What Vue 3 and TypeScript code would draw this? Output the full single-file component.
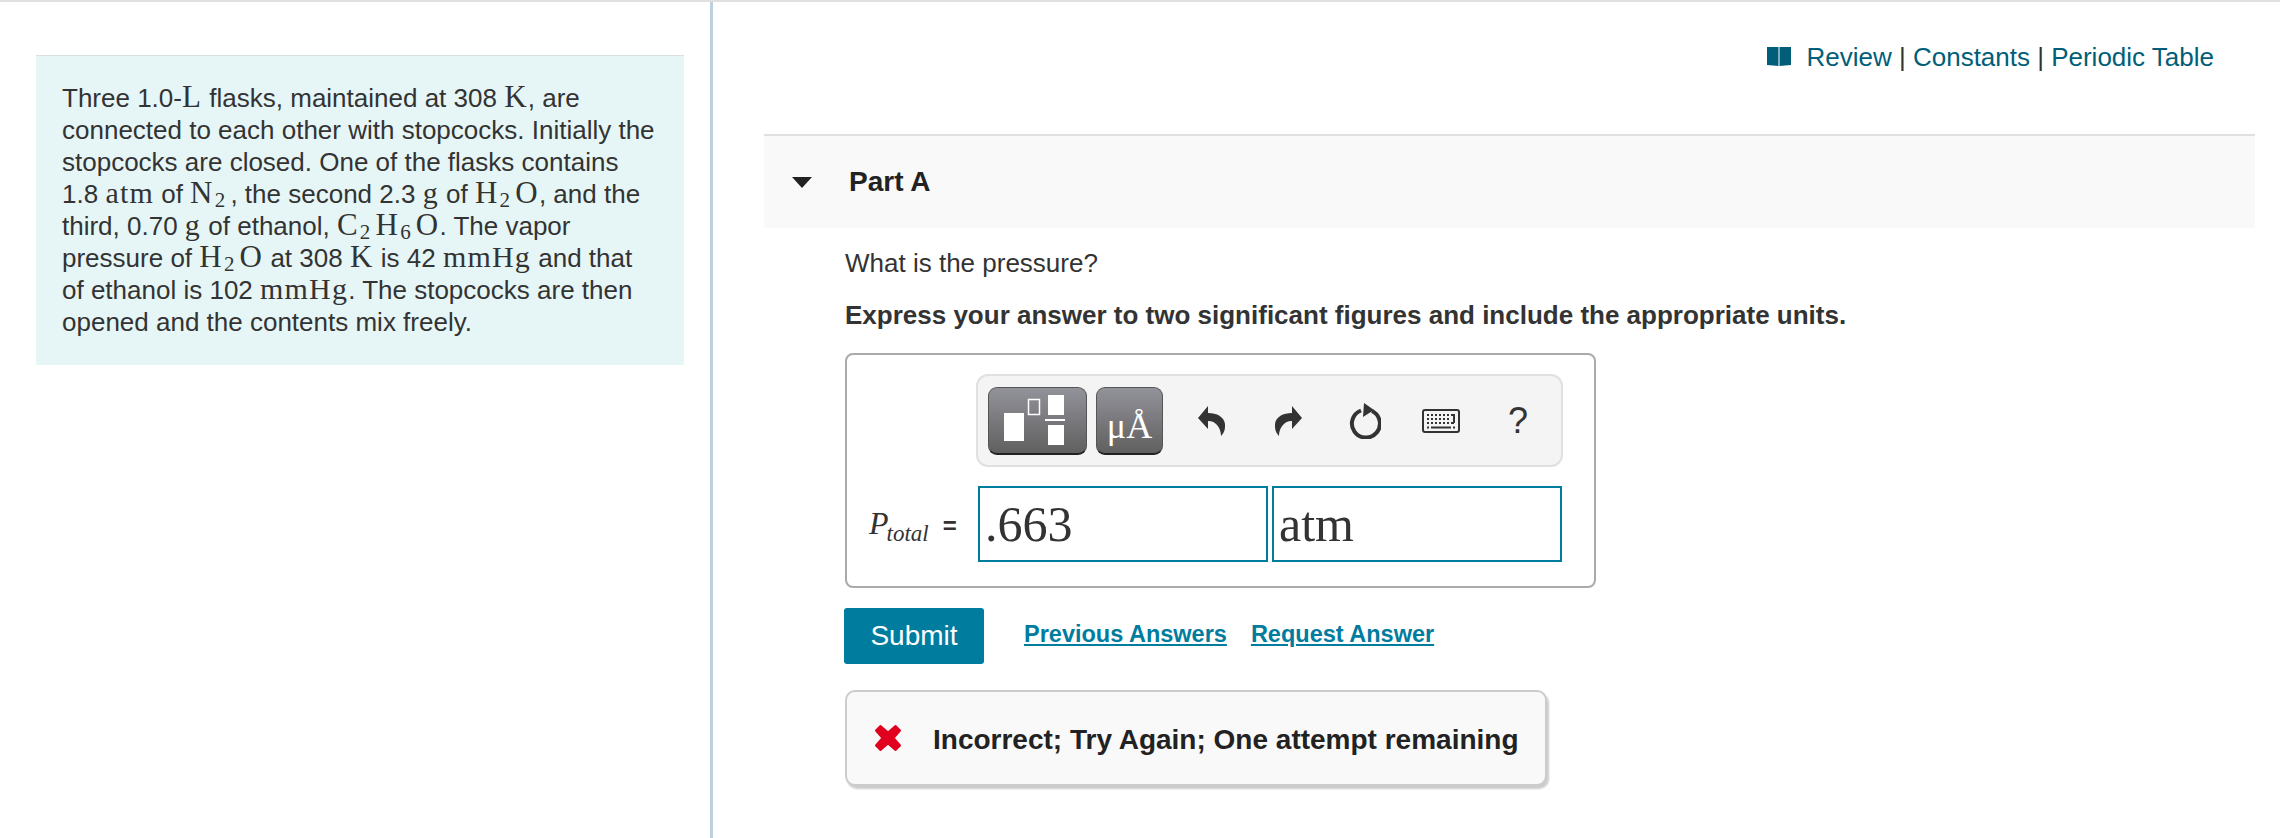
<script setup lang="ts">
// 作答页：左侧题干，右侧 Part A 作答区
const links = ['Review', 'Constants', 'Periodic Table']
</script>

<template>
  <div class="page">
    <aside class="side">
      <div class="intro">
        Three 1.0-<span class="m big">L</span> flasks, maintained at 308 <span class="m big">K</span>, are connected to each other with stopcocks. Initially the stopcocks are closed. One of the flasks contains 1.8 <span class="m">atm</span> of <span class="m big">N<sub>2</sub></span>, the second 2.3 <span class="m">g</span> of <span class="m big">H<sub>2</sub>O</span>, and the third, 0.70 <span class="m">g</span> of ethanol, <span class="m big">C<sub>2</sub>H<sub>6</sub>O</span>. The vapor pressure of <span class="m big">H<sub>2</sub>O</span> at 308 <span class="m big">K</span> is 42 <span class="m">mmHg</span> and that of ethanol is 102 <span class="m">mmHg</span>. The stopcocks are then opened and the contents mix freely.
      </div>
    </aside>

    <main class="main">
      <nav class="toplinks">
        <svg class="book" width="24" height="20" viewBox="0 0 24 20">
          <path d="M0 0h11.500v19L0 18zM12.500 0H24v18l-11.500 1z" fill="#005e78" />
        </svg>
        <template v-for="(link, i) in links" :key="link">
          <span v-if="i > 0" class="sep">|</span>
          <a class="toplink">{{ link }}</a>
        </template>
      </nav>

      <section class="part-head">
        <span class="caret"></span>
        <h2 class="part-title">Part A</h2>
      </section>

      <section class="part-body">
        <p class="question">What is the pressure?</p>
        <p class="instruction">Express your answer to two significant figures and include the appropriate units.</p>

        <div class="answer">
          <div class="toolbar">
            <button class="tool tool-wide">
              <svg class="tpl-icon" width="61" height="50" viewBox="0 0 61 50">
                <rect x="0" y="18" width="20" height="28" fill="#fff" />
                <rect x="24.500" y="4.500" width="11" height="15" fill="none" stroke="#fff" stroke-width="1.500" />
                <rect x="44" y="0" width="16" height="20" fill="#fff" />
                <rect x="41" y="24" width="20" height="2" fill="#fff" />
                <rect x="44" y="30" width="16" height="20" fill="#fff" />
              </svg>
            </button>
            <button class="tool tool-unit">
              <span class="unit-text">μÅ</span>
            </button>
            <svg class="ico ico-undo" width="27" height="30" viewBox="0 0 27 30">
              <path d="M0 12 10 0v7c10 0 18 5 17 14 0 4-2 7-4 9 0-7-4-15-13-15v8z" fill="#333" />
            </svg>
            <svg class="ico ico-redo" width="27" height="30" viewBox="0 0 27 30">
              <path d="M27 12 17 0v7C7 7-1 12 0 21c0 4 2 7 4 9 0-7 4-15 13-15v8z" fill="#333" />
            </svg>
            <svg class="ico ico-reset" width="32" height="36" viewBox="0 0 32 36">
              <path d="M12 7.500A14 14 0 1 0 23 8" fill="none" stroke="#333" stroke-width="4" />
              <path d="M15 0l10 7-11 7z" fill="#333" />
            </svg>
            <svg class="ico ico-keys" width="38" height="24" viewBox="0 0 38 24">
              <rect x="1" y="1" width="36" height="22" rx="2" fill="#f4f4f4" stroke="#333" stroke-width="2" />
              <path d="M5 6h2M9 6h2M13 6h2M17 6h2M21 6h2M25 6h2M29 6h4M5 10h2M9 10h2M13 10h2M17 10h2M21 10h2M25 10h2M32 7v7M29 14h3M5 14h2M9 14h2M13 14h2M17 14h2M21 14h2M25 14h2M5 18.500h2M9 18.500h20M31 18.500h2" stroke="#333" stroke-width="2" />
            </svg>
            <span class="help">?</span>
          </div>
          <div class="entry">
            <span class="label"><i>P</i><sub><i>total</i></sub><span class="eq">=</span></span>
            <div class="field">.663</div>
            <div class="field">atm</div>
          </div>
        </div>

        <div class="actions">
          <button class="submit">Submit</button>
          <a class="action-link">Previous Answers</a>
          <a class="action-link">Request Answer</a>
        </div>

        <div class="feedback">
          <svg width="28" height="28" viewBox="0 0 28 28">
            <path d="M2 6.500 6.500 2 14 8.500 21.500 2 26 6.500 19.500 14 26 21.500 21.500 26 14 19.500 6.500 26 2 21.500 8.500 14z" fill="#e1001e" stroke="#e1001e" stroke-width="2" stroke-linejoin="round" />
          </svg>
          <span class="feedback-text">Incorrect; Try Again; One attempt remaining</span>
        </div>
      </section>
    </main>
  </div>
</template>

<style>
html, body {
  margin: 0;
  background: #fff;
}
</style>

<style scoped>
.page {
  display: grid;
  grid-template-columns: 713px 1fr;
  height: 836px;
  border-top: 2px solid #e0e0e0;
  font-family: "Liberation Sans", Arial, sans-serif;
  color: #333;
  overflow: hidden;
}

.side {
  border-right: 3px solid #bdd0e0;
  padding: 53px 26px 0 36px;
}

.intro {
  background: #e6f6f6;
  border-top: 1px solid #d8e0e0;
  padding: 26px 26px 27px 26px;
  font-size: 26px;
  line-height: 32px;
  color: #333;
}

.m {
  font-family: "Liberation Serif", serif;
  font-size: 30px;
  letter-spacing: 1.200px;
  line-height: 0;
}

.m.big {
  font-size: 31px;
}

.m sub {
  margin: 0 4px 0 1px;
  font-size: 21px;
  line-height: 0;
  vertical-align: -4px;
}

.main {
  padding: 0 25px 0 51px;
}

.toplinks {
  display: flex;
  justify-content: flex-end;
  align-items: center;
  height: 110px;
  padding-right: 41px;
  margin-bottom: 22px;
  font-size: 26px;
}

.book {
  margin-right: 16px;
}

.toplink {
  color: #005e78;
}

.sep {
  color: #333;
  margin: 0 7.200px;
}

.part-head {
  display: flex;
  align-items: center;
  height: 92px;
  background: #f9f9f9;
  border-top: 2px solid #e0e0e0;
}

.caret {
  width: 0;
  height: 0;
  margin-left: 28px;
  border-left: 10.500px solid transparent;
  border-right: 10.500px solid transparent;
  border-top: 11px solid #222;
}

.part-title {
  margin: 0 0 0 37px;
  font-size: 28px;
  font-weight: 700;
  color: #222;
}

.part-body {
  padding-left: 81px;
}

.question {
  margin: 20px 0 0;
  font-size: 26px;
  line-height: 30px;
}

.instruction {
  margin: 22px 0 0;
  font-size: 26px;
  line-height: 30px;
  font-weight: 700;
}

.answer {
  box-sizing: border-box;
  width: 751px;
  height: 235px;
  margin-top: 23px;
  padding: 19px 0 0 129px;
  border: 2px solid #aaa;
  border-radius: 8px;
}

.toolbar {
  box-sizing: border-box;
  display: flex;
  align-items: center;
  width: 587px;
  height: 93px;
  padding-left: 10px;
  background: #f4f4f4;
  border: 2px solid #e0e0e0;
  border-radius: 12px;
}

.tool {
  box-sizing: border-box;
  display: flex;
  align-items: center;
  justify-content: center;
  height: 68px;
  padding: 0;
  background: linear-gradient(#92929a, #606060);
  border: 1px solid #555;
  border-bottom: 2px solid #222;
  border-radius: 9px;
}

.tool-wide {
  width: 99px;
}

.tpl-icon {
  margin-right: 6px;
}

.tool-unit {
  width: 67px;
  margin-left: 9px;
}

.unit-text {
  font-family: "Liberation Serif", serif;
  font-size: 36px;
  line-height: 1;
  color: #fff;
  margin-top: 11px;
}

.ico {
  flex: none;
}

.ico-undo {
  margin-left: 35px;
}

.ico-redo {
  margin-left: 50px;
}

.ico-reset {
  margin-left: 47px;
}

.ico-keys {
  margin-left: 41px;
}

.help {
  margin-left: 48px;
  font-size: 36px;
  color: #333;
}

.entry {
  display: flex;
  align-items: center;
  margin: 19px 0 0 -129px;
}

.label {
  box-sizing: border-box;
  width: 131px;
  padding-left: 22px;
  padding-bottom: 2px;
  font-family: "Liberation Serif", serif;
  font-size: 32px;
  color: #333;
}

.label sub {
  margin-left: -2px;
  font-size: 23px;
  line-height: 0;
}

.eq {
  margin-left: 14px;
  font-family: "Liberation Sans", sans-serif;
  font-size: 24px;
  font-weight: 700;
}

.field {
  box-sizing: border-box;
  width: 290px;
  height: 76px;
  margin-right: 4px;
  padding-left: 5px;
  border: 2px solid #007c9e;
  font-family: "Liberation Serif", serif;
  font-size: 50px;
  line-height: 72px;
  color: #333;
}

.actions {
  display: flex;
  align-items: center;
  gap: 24px;
  margin-top: 20px;
  margin-left: -1px;
}

.submit {
  width: 140px;
  height: 56px;
  margin-right: 16px;
  padding: 0;
  background: #007c9e;
  border: 0;
  border-radius: 3px;
  font-family: "Liberation Sans", sans-serif;
  font-size: 28px;
  color: #fff;
}

.action-link {
  position: relative;
  top: -2px;
  font-size: 23.500px;
  font-weight: 700;
  color: #007c9e;
  text-decoration: underline;
}

.feedback {
  box-sizing: border-box;
  display: flex;
  align-items: center;
  gap: 31px;
  width: 702px;
  height: 96px;
  margin-top: 26px;
  padding-left: 27px;
  background: #f9f9f9;
  border: 2px solid #ccc;
  border-radius: 10px;
  box-shadow: 2px 3px 2px #ccc;
}

.feedback-text {
  padding-top: 3px;
  font-size: 28px;
  font-weight: 700;
  color: #222;
}
</style>
